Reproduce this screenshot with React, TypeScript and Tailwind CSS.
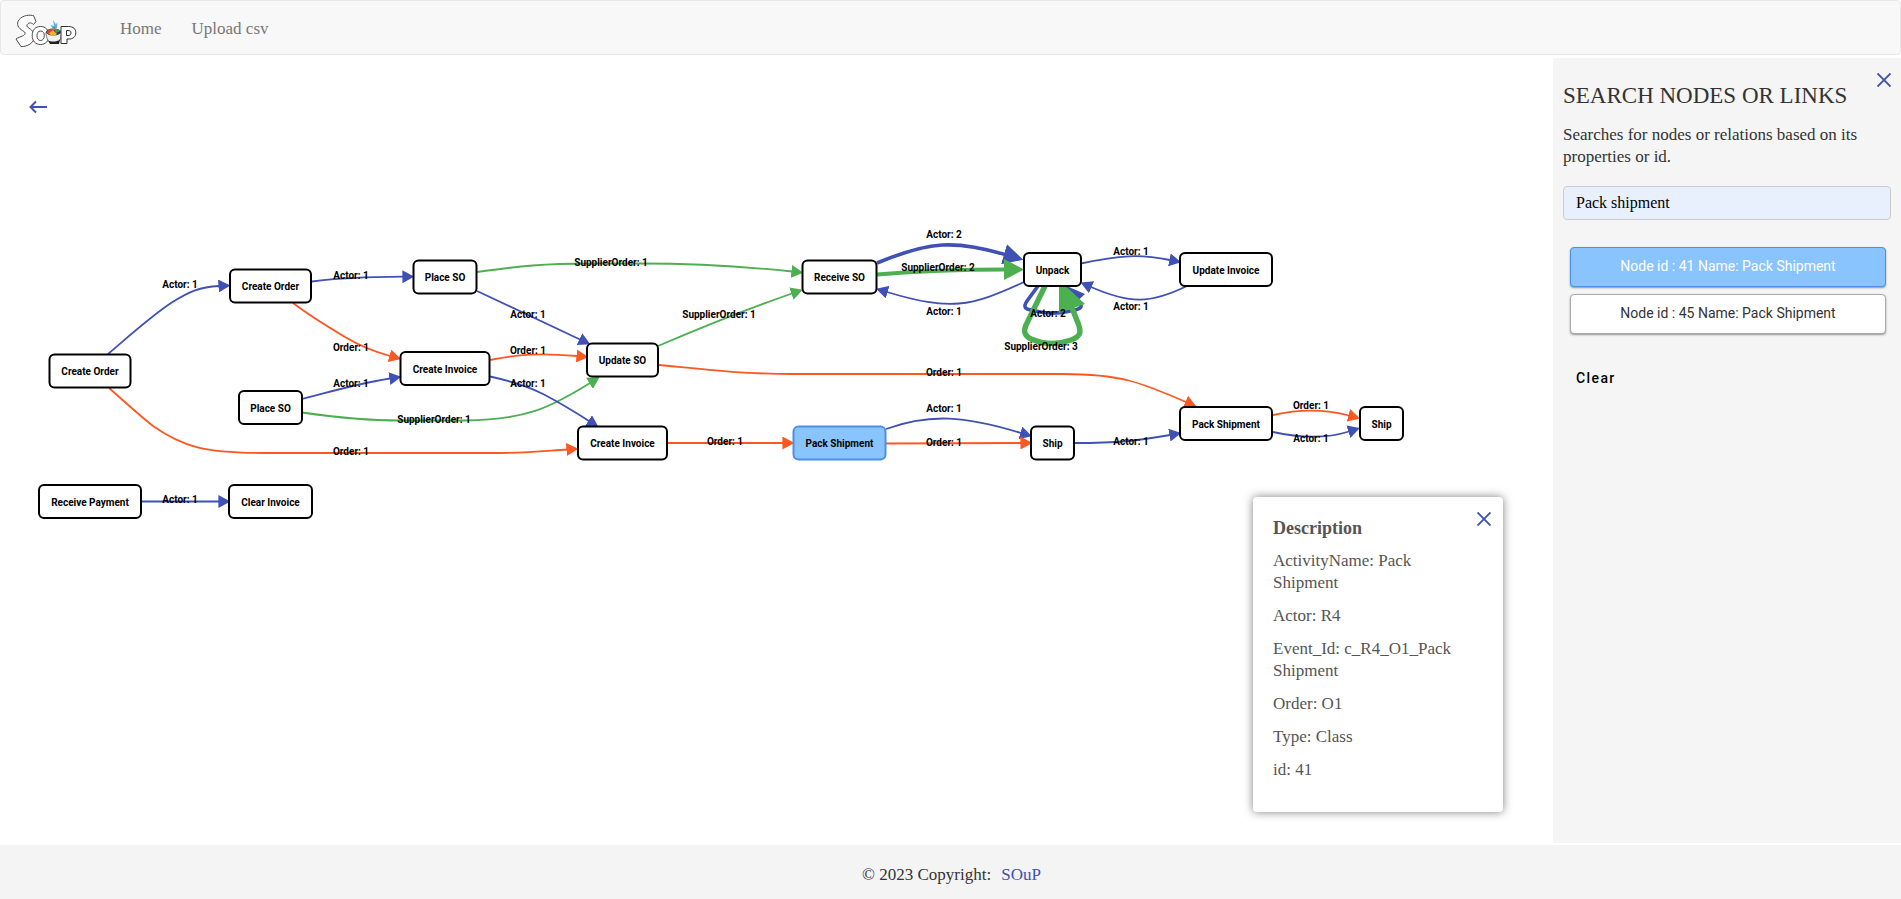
import React, { useState } from "react";

const BLUE = "#3f51b5";
const ORANGE = "#ff5722";
const GREEN = "#4caf50";

type NodeDef = { id: number; name: string; x: number; y: number; w: number };

const nodes: NodeDef[] = [
  { id: 31, name: "Create Order", x: 90, y: 371, w: 81 },
  { id: 32, name: "Create Order", x: 270.5, y: 286, w: 81 },
  { id: 33, name: "Place SO", x: 445, y: 277, w: 63 },
  { id: 34, name: "Create Invoice", x: 445, y: 368.5, w: 89 },
  { id: 35, name: "Place SO", x: 270.5, y: 407.5, w: 63 },
  { id: 36, name: "Receive Payment", x: 90, y: 501.5, w: 102 },
  { id: 37, name: "Clear Invoice", x: 270.5, y: 501.5, w: 83 },
  { id: 38, name: "Update SO", x: 622.5, y: 360, w: 71 },
  { id: 39, name: "Create Invoice", x: 622.5, y: 443, w: 89 },
  { id: 40, name: "Receive SO", x: 839.5, y: 277, w: 74 },
  { id: 41, name: "Pack Shipment", x: 839.5, y: 443, w: 92 },
  { id: 42, name: "Unpack", x: 1052.5, y: 269.5, w: 57 },
  { id: 43, name: "Update Invoice", x: 1226, y: 269.5, w: 92 },
  { id: 44, name: "Ship", x: 1052.5, y: 443, w: 43 },
  { id: 45, name: "Pack Shipment", x: 1226, y: 423.5, w: 92 },
  { id: 46, name: "Ship", x: 1381.5, y: 423.5, w: 43 },
];

type EdgeDef = { d: string; color: string; width?: number; size?: number };

const edges: EdgeDef[] = [
  { d: "M108 354C128 337 150 317 171 303C190 291 200 287 219 286", color: BLUE },
  { d: "M109 388C125 402 139 415 153 426C183 447 205 453 263 453L500 453C530 453 545 451 567 449.5", color: ORANGE },
  { d: "M312 281.5C340 278 360 277 403 276.7", color: BLUE },
  { d: "M293 303C310 316 330 328 345 337C360 346 372 351 390 356", color: ORANGE },
  { d: "M302 399C330 392 355 384 390 378.5", color: BLUE },
  { d: "M302 412.5C340 418 370 420.5 400 420.5L465 420.5C525 420 550 408 590 383", color: GREEN },
  { d: "M490 360C520 354 540 353 577 356", color: ORANGE },
  { d: "M490 376.5C515 382 530 387 545 395C560 403 575 412 589 421", color: BLUE },
  { d: "M477 291L580 339.5", color: BLUE },
  { d: "M477 272C520 266 545 263.5 590 263.5L640 263.5C700 263.5 740 266 792 271.5", color: GREEN },
  { d: "M658 346C700 328 750 308 792 293.5", color: GREEN },
  { d: "M658 365C700 369 740 374 793 374L1063 374C1120 374 1140 382 1186 402", color: ORANGE },
  { d: "M667 443L783 443", color: ORANGE },
  { d: "M886 429C930 413 965 416 1021 433", color: BLUE },
  { d: "M886 443.5L1021 443", color: ORANGE },
  { d: "M877 263C930 241 955 240 1005 254.5", color: BLUE, width: 3.6, size: 20 },
  { d: "M877 274.5C920 271 950 269.5 1005 269.5", color: GREEN, width: 4, size: 20 },
  { d: "M1024 282C970 307 950 311 887 292", color: BLUE },
  { d: "M1081 263.5C1120 255 1140 254 1170 260", color: BLUE },
  { d: "M1187 286C1150 304 1130 304 1091 287", color: BLUE },
  { d: "M1074 443C1120 443 1135 441 1170 435", color: BLUE },
  { d: "M1273 415C1300 409 1325 409 1349 415.5", color: ORANGE },
  { d: "M1273 432C1300 438 1325 439 1349 431.5", color: BLUE },
  { d: "M141 501.5L219 501.5", color: BLUE },
];

const labels: [string, number, number][] = [
  ["Actor: 1", 180, 288],
  ["Actor: 1", 351, 279],
  ["Order: 1", 351, 351],
  ["Actor: 1", 351, 387],
  ["SupplierOrder: 1", 434, 423],
  ["Order: 1", 351, 455],
  ["Actor: 1", 180, 503],
  ["SupplierOrder: 1", 611, 266],
  ["Actor: 1", 528, 318],
  ["Order: 1", 528, 354],
  ["Actor: 1", 528, 387],
  ["SupplierOrder: 1", 719, 318],
  ["Order: 1", 725, 445],
  ["Actor: 2", 944, 238],
  ["SupplierOrder: 2", 938, 271],
  ["Actor: 1", 944, 315],
  ["Actor: 1", 1131, 255],
  ["Actor: 1", 1131, 310],
  ["Actor: 2", 1048, 317],
  ["SupplierOrder: 3", 1041, 350],
  ["Order: 1", 944, 376],
  ["Actor: 1", 944, 412],
  ["Order: 1", 944, 446],
  ["Actor: 1", 1131, 445],
  ["Order: 1", 1311, 409],
  ["Actor: 1", 1311, 442],
];

const markerNames: Record<string, string> = { [BLUE]: "actor", [ORANGE]: "order", [GREEN]: "supplier" };

function Graph({ selected }: { selected: number }) {
  return (
    <svg viewBox="30 220 1390 310" width="1390" height="310" role="img" aria-label="Activity graph" className="block shrink-0">
      <defs>
        {[BLUE, ORANGE, GREEN].map((c) =>
          [12, 20].map((s) => (
            <marker key={c + s} id={`${markerNames[c]}-${s}`} viewBox="0 0 10 10" refX="0.5" refY="5" markerWidth={s} markerHeight={s + 1} markerUnits="userSpaceOnUse" preserveAspectRatio="none" orient="auto">
              <path d="M0 0L10 5L0 10Z" fill={c} />
            </marker>
          )),
        )}
      </defs>
      <g fill="none">
        {edges.map((e) => (
          <path key={e.d} d={e.d} stroke={e.color} strokeWidth={e.width ?? 1.8} markerEnd={`url(#${markerNames[e.color]}-${e.size ?? 12})`} />
        ))}
        <path d="M1038 286L1027 301C1023 307 1025 309 1031 310C1045 314 1058 314 1070 311C1083 309 1084 306 1076 299" stroke={BLUE} strokeWidth="3.6" />
        <path d="M1062 284L1085 294L1070 308Z" fill={BLUE} />
        <path d="M1045 286L1026 325C1023 332 1025 336 1031 339C1045 345 1060 344 1071 340C1082 336 1081 331 1078 323L1072 308" stroke={GREEN} strokeWidth="5.4" />
        <path d="M1059 280L1059 313L1085 304Z" fill={GREEN} />
      </g>
      {nodes.map((n) => (
        <rect key={n.id} x={n.x - n.w / 2} y={n.y - 16.5} width={n.w} height="33" rx="5" fill={n.id === selected ? "#8ac4ff" : "#ffffff"} stroke={n.id === selected ? "#4a90e8" : "#000000"} strokeWidth="2" />
      ))}
      <g textAnchor="middle" fill="#000" className="font-[Roboto,sans-serif] text-[10px] font-bold">
        {nodes.map((n) => (
          <text key={n.id} x={n.x} y={n.y + 4}>{n.name}</text>
        ))}
        {labels.map(([t, x, y]) => (
          <text key={`${x}-${y}`} x={x} y={y}>{t}</text>
        ))}
      </g>
    </svg>
  );
}

function CloseIcon() {
  return (
    <svg viewBox="0 0 14 14" className="size-[14px]" stroke={BLUE} strokeWidth="1.9" aria-hidden="true">
      <path d="M0.500 0.500L13.500 13.500M13.500 0.500L0.500 13.500" />
    </svg>
  );
}

function Logo() {
  return (
    <svg viewBox="0 0 62 34" className="h-[34px] w-[62px]" aria-label="SOuP" role="img">
      <g fill="#fff" stroke="#4a4a4a" strokeWidth="1" strokeLinejoin="round">
        <path d="M17.500 1.500C13 0.500 5.500 2 3 7.500C1.500 12 4.500 15 9 17.500C11 19 10 21 7.500 22C5.500 23 3 23.500 1 25L6 32.500C12 33 19 29 19.500 23C20 18 16 15.500 13 13.500C11 12 12 9.500 14.500 9C16 8.600 17.500 9.500 18.500 10.500L21 7.500L18.500 1.500Z" />
        <path fillRule="evenodd" d="M25.500 12.500C20 12.500 17.200 16.500 17.200 21.500C17.200 27 20.500 30.500 25.500 30.500C30.500 30.500 34 27 34 21.500C34 16 30.500 12.500 25.500 12.500ZM25.700 17C28.300 17 29.300 19 29.300 21.500C29.300 24.500 28 26.500 25.500 26.500C23 26.500 22 24.300 22 21.500C22 19 23 17 25.700 17Z" />
      </g>
      <path d="M31 18C31 25 34 29.500 39 29.500C44 29.500 46.500 25 46.500 18Z" fill="#f1f1f1" stroke="#555" strokeWidth="0.800" />
      <path d="M33 26.500C36 28 42 28 45 25.500L44 30H35Z" fill="#222" />
      <ellipse cx="38.500" cy="18" rx="7.500" ry="3.500" fill="#35354a" />
      <path d="M31.500 18.500C33 15 37 14.500 39 15L37 20.500C35 20.500 33 20 31.500 18.500Z" fill="#e3442e" />
      <path d="M34 19.500L38 16L42 20C40 22.500 36 22 34 19.500Z" fill="#f3b02d" />
      <path d="M39 15C41 14.500 44 15.500 45.500 17L41 19Z" fill="#3b9b55" />
      <path d="M38.500 16L35.500 11L39 12L38 6L41 10.500L42.500 8L42 14Z" fill="#58b5dd" />
      <path d="M39 16L38 12.500L40.500 13.500Z" fill="#d95a55" />
      <path fillRule="evenodd" d="M46 12.500H53.500C58.500 12.500 60.800 15 60.800 18.800C60.800 22.600 58 25 54 25H52V29.500H46ZM51.500 16.500V21.500H53C55 21.500 56 20.800 56 19C56 17.200 55 16.500 53 16.500Z" fill="#fff" stroke="#333" strokeWidth="1" strokeLinejoin="round" />
    </svg>
  );
}

const details = ["ActivityName: Pack Shipment", "Actor: R4", "Event_Id: c_R4_O1_Pack Shipment", "Order: O1", "Type: Class", "id: 41"];

export default function App() {
  const [query, setQuery] = useState("Pack shipment");
  const [selected, setSelected] = useState(41);

  return (
    <div className="flex min-h-screen flex-col bg-white font-['Liberation_Serif',serif] text-[17px] leading-[22px] text-[#333]">
      <nav className="flex h-[55px] items-center rounded border border-[#e7e7e7] bg-[#f8f8f8] px-[14px] pt-0.5 text-[#777]">
        <a href="#home" className="mt-1"><Logo /></a>
        <a href="#home" className="ml-[43px]">Home</a>
        <a href="#upload" className="ml-[30px]">Upload csv</a>
      </nav>

      <div className="flex flex-1">
        <main className="relative flex min-w-0 flex-1 flex-col overflow-hidden">
          <button type="button" aria-label="Back" className="mt-11 ml-7 flex h-4 w-5 items-center justify-center">
            <svg viewBox="0 0 20 14" className="h-[14px] w-5" fill="none" stroke={BLUE} strokeWidth="2" aria-hidden="true">
              <path d="M19 7H3M8 1.500L2.500 7L8 12.500" />
            </svg>
          </button>
          <div className="mt-[105px] ml-[30px]">
            <Graph selected={selected} />
          </div>
          <section className="absolute right-[50px] bottom-[33px] min-h-[315px] w-[250px] rounded bg-white p-5 text-[#555] shadow-[0_0_10px_rgba(0,0,0,0.5)]">
            <button type="button" aria-label="Close description" className="absolute top-[15px] right-3"><CloseIcon /></button>
            <h2 className="mb-[11px] text-[18px] font-bold">Description</h2>
            {details.map((line) => (
              <p key={line} className="mb-[11px] pr-5">{line}</p>
            ))}
          </section>
        </main>

        <aside className="relative mt-[3px] mb-0.5 w-[348px] shrink-0 bg-[#f5f5f5] px-[10px] pt-[25px]">
          <button type="button" aria-label="Close search" className="absolute top-[15px] right-[10px]"><CloseIcon /></button>
          <h1 className="text-[23px] leading-[26px]">SEARCH NODES OR LINKS</h1>
          <p className="mt-[15px]">Searches for nodes or relations based on its properties or id.</p>
          <input
            aria-label="Search nodes or links"
            value={query}
            onChange={(e) => setQuery(e.target.value)}
            className="mt-[18px] h-[34px] w-full rounded border border-[#ccc] bg-[#e8f0fe] px-3 text-[16px] text-black outline-none"
          />
          <div className="mt-[27px] flex flex-col gap-[7px] pr-[5px] pl-[7px] font-[Roboto,sans-serif] text-[14px]">
            {[41, 45].map((id) => (
              <button
                key={id}
                type="button"
                onClick={() => setSelected(id)}
                className={
                  id === selected
                    ? "h-10 rounded border border-[#4a90e8] bg-[#8ac4ff] pb-0.5 text-white shadow-[0_1px_2px_rgba(0,0,0,0.4)]"
                    : "h-10 rounded border border-[#aaa] bg-white pb-0.5 text-[#333] shadow-[0_1px_2px_rgba(0,0,0,0.4)]"
                }
              >
                Node id : {id} Name: Pack Shipment
              </button>
            ))}
          </div>
          <button type="button" onClick={() => setQuery("")} className="mt-[33px] ml-[13px] font-[Roboto,sans-serif] text-[14px] font-medium tracking-widest text-black">
            Clear
          </button>
        </aside>
      </div>

      <footer className="flex h-[54px] items-center justify-center gap-[10px] bg-[#f4f4f4] pt-1.5 pl-0.5">
        <span>© 2023 Copyright:</span>
        <a href="#soup" className="text-[#3f51b5]">SOuP</a>
      </footer>
    </div>
  );
}
